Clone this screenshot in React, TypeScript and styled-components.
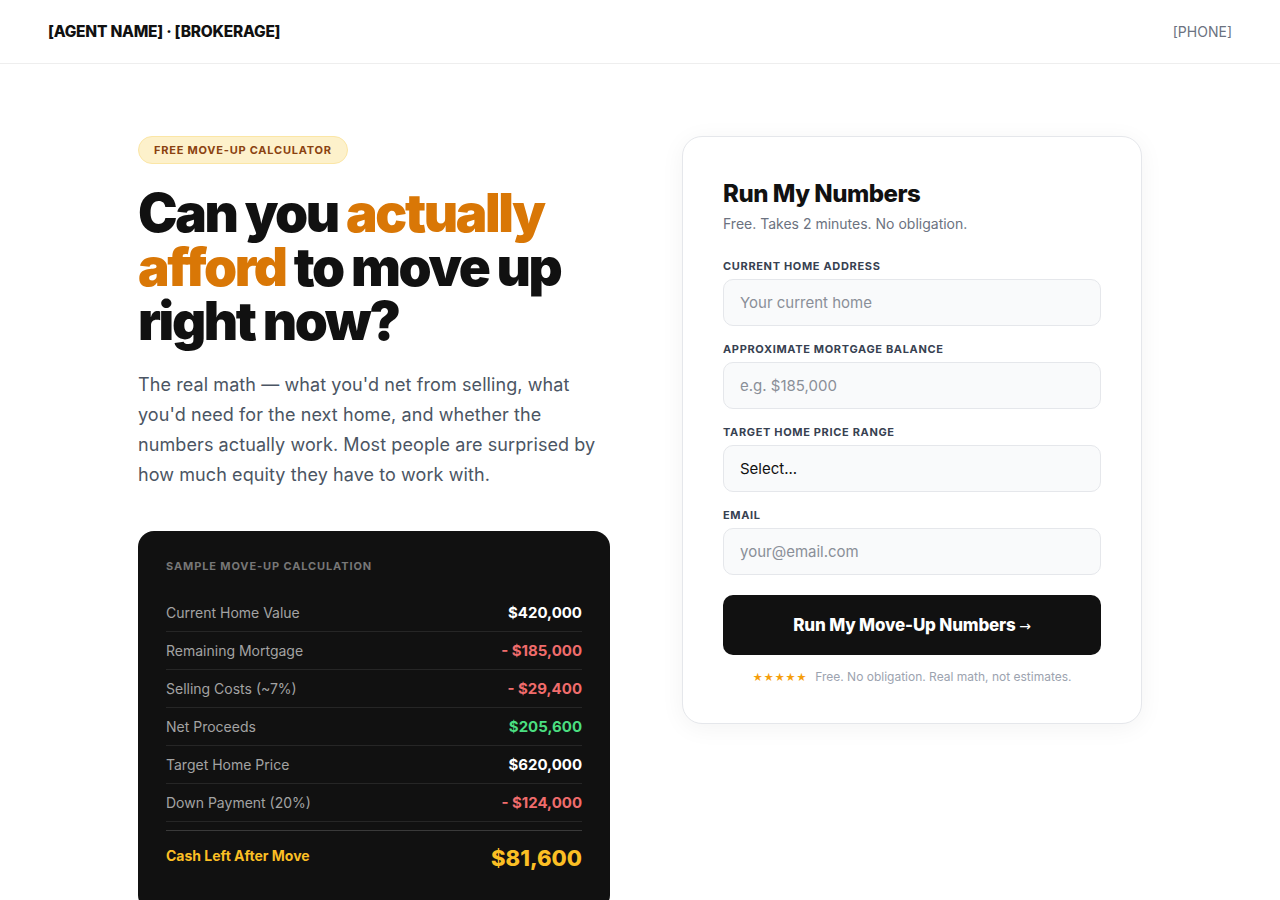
import React from "react";
import styled, { createGlobalStyle } from "styled-components";

const GlobalStyle = createGlobalStyle`
  * { box-sizing: border-box; }
  body {
    margin: 0;
    background: #ffffff;
    font-family: Inter, "Liberation Sans", sans-serif;
    color: #111111;
  }
`;

const DISPLAY = `Inter, "Liberation Sans", sans-serif`;

type Tone = "plain" | "minus" | "plus";

const rows: { label: string; value: string; tone: Tone }[] = [
  { label: "Current Home Value", value: "$420,000", tone: "plain" },
  { label: "Remaining Mortgage", value: "- $185,000", tone: "minus" },
  { label: "Selling Costs (~7%)", value: "- $29,400", tone: "minus" },
  { label: "Net Proceeds", value: "$205,600", tone: "plus" },
  { label: "Target Home Price", value: "$620,000", tone: "plain" },
  { label: "Down Payment (20%)", value: "- $124,000", tone: "minus" },
];

const fields = [
  { label: "Current Home Address", placeholder: "Your current home", type: "text" },
  { label: "Approximate Mortgage Balance", placeholder: "e.g. $185,000", type: "text" },
  { label: "Target Home Price Range", placeholder: "", type: "select" },
  { label: "Email", placeholder: "your@email.com", type: "email" },
];

export default function App() {
  return (
    <>
      <GlobalStyle />
      <Header>
        <Brand>[AGENT NAME] · [BROKERAGE]</Brand>
        <Phone>[PHONE]</Phone>
      </Header>
      <Main>
        <Left>
          <Badge>Free Move-Up Calculator</Badge>
          <Title>
            Can you <Accent>actually afford</Accent> to move up right now?
          </Title>
          <Lead>
            The real math — what you'd net from selling, what you'd need for the next home, and
            whether the numbers actually work. Most people are surprised by how much equity they
            have to work with.
          </Lead>
          <CalcCard>
            <CalcTitle>Sample Move-Up Calculation</CalcTitle>
            {rows.map((r) => (
              <CalcRow key={r.label}>
                <CalcLabel>{r.label}</CalcLabel>
                <CalcValue tone={r.tone}>{r.value}</CalcValue>
              </CalcRow>
            ))}
            <TotalRow>
              <TotalLabel>Cash Left After Move</TotalLabel>
              <TotalValue>$81,600</TotalValue>
            </TotalRow>
          </CalcCard>
        </Left>
        <FormCard>
          <FormTitle>Run My Numbers</FormTitle>
          <FormSub>Free. Takes 2 minutes. No obligation.</FormSub>
          <Fields>
            {fields.map((f) => (
              <Field key={f.label}>
                <FieldLabel>{f.label}</FieldLabel>
                {f.type === "select" ? (
                  <SelectBox defaultValue="">
                    <option value="">Select...</option>
                    <option>$400k – $500k</option>
                    <option>$500k – $650k</option>
                    <option>$650k – $800k</option>
                    <option>$800k+</option>
                  </SelectBox>
                ) : (
                  <TextInput type={f.type} placeholder={f.placeholder} />
                )}
              </Field>
            ))}
          </Fields>
          <SubmitButton type="button">
            Run My Move-Up Numbers <Arrow>→</Arrow>
          </SubmitButton>
          <Note>
            <Stars>★★★★★</Stars>
            Free. No obligation. Real math, not estimates.
          </Note>
        </FormCard>
      </Main>
    </>
  );
}

const Header = styled.header`
  display: flex;
  align-items: center;
  justify-content: space-between;
  height: 64px;
  padding: 0 48px;
  border-bottom: 1px solid #eeeeee;
`;

const Brand = styled.div`
  font-family: ${DISPLAY};
  font-weight: 800;
  font-size: 15.5px;
  letter-spacing: -0.015em;
  color: #111111;
`;

const Phone = styled.div`
  font-size: 14px;
  color: #6b7280;
`;

const Main = styled.main`
  display: grid;
  grid-template-columns: 472px 460px;
  justify-content: center;
  align-items: start;
  gap: 72px;
  padding: 72px 48px 0;
`;

const Left = styled.section`
  display: flex;
  flex-direction: column;
  align-items: flex-start;
`;

const Badge = styled.span`
  display: inline-block;
  padding: 7px 15px;
  border-radius: 999px;
  background: #fdf1cb;
  border: 1px solid #fbe6a6;
  color: #8a4210;
  font-size: 11px;
  font-weight: 700;
  letter-spacing: 0.07em;
  text-transform: uppercase;
  line-height: 12px;
`;

const Title = styled.h1`
  margin: 22px 0 0;
  font-family: ${DISPLAY};
  font-weight: 900;
  font-size: 53px;
  line-height: 54px;
  letter-spacing: -0.045em;
  color: #111111;
  max-width: 460px;
`;

const Accent = styled.span`
  color: #d97706;
`;

const Lead = styled.p`
  margin: 22px 0 0;
  font-size: 18px;
  line-height: 30px;
  letter-spacing: 0.005em;
  color: #4b5563;
  max-width: 470px;
`;

const CalcCard = styled.div`
  width: 100%;
  margin-top: 41px;
  padding: 28px 28px 40px;
  border-radius: 16px;
  background: #111111;
`;

const CalcTitle = styled.div`
  font-size: 11px;
  font-weight: 700;
  letter-spacing: 0.08em;
  text-transform: uppercase;
  color: #777777;
  margin-bottom: 21px;
`;

const CalcRow = styled.div`
  display: flex;
  justify-content: space-between;
  align-items: center;
  height: 38px;
  border-bottom: 1px solid #262626;
`;

const CalcLabel = styled.span`
  font-size: 14px;
  color: #a3a3a3;
`;

const toneColor: Record<Tone, string> = {
  plain: "#ffffff",
  minus: "#f06c6c",
  plus: "#4ade80",
};

const CalcValue = styled.span<{ tone: Tone }>`
  font-size: 15px;
  font-weight: 700;
  color: ${(p) => toneColor[p.tone]};
`;

const TotalRow = styled.div`
  display: flex;
  justify-content: space-between;
  align-items: center;
  margin-top: 8px;
  padding-top: 14px;
  border-top: 1px solid #3a3a3a;
`;

const TotalLabel = styled.span`
  font-size: 14px;
  font-weight: 700;
  color: #fbbf24;
  padding-bottom: 6px;
`;

const TotalValue = styled.span`
  font-size: 22px;
  font-weight: 800;
  color: #fbbf24;
`;

const FormCard = styled.section`
  padding: 41px 40px 39px;
  border: 1px solid #e5e7eb;
  border-radius: 20px;
  background: #ffffff;
  box-shadow: 0 4px 24px rgba(0, 0, 0, 0.05);
`;

const FormTitle = styled.h2`
  margin: 0;
  font-family: ${DISPLAY};
  font-weight: 800;
  font-size: 24px;
  line-height: 32px;
  letter-spacing: -0.02em;
  color: #111111;
`;

const FormSub = styled.p`
  margin: 4px 0 0;
  font-size: 14px;
  line-height: 20px;
  color: #6b7280;
`;

const Fields = styled.div`
  display: flex;
  flex-direction: column;
  gap: 17px;
  margin-top: 26px;
`;

const Field = styled.label`
  display: flex;
  flex-direction: column;
  gap: 6px;
`;

const FieldLabel = styled.span`
  font-size: 11px;
  font-weight: 700;
  letter-spacing: 0.06em;
  text-transform: uppercase;
  color: #374151;
  line-height: 13px;
`;

const inputBase = `
  width: 100%;
  height: 47px;
  padding: 0 16px;
  border: 1px solid #e5e7eb;
  border-radius: 10px;
  background: #f9fafb;
  font-family: Inter, "Liberation Sans", sans-serif;
  font-size: 15px;
  color: #111111;
  outline: none;
`;

const TextInput = styled.input`
  ${inputBase}
  &::placeholder {
    color: #8a8f98;
  }
`;

const SelectBox = styled.select`
  ${inputBase}
  appearance: none;
`;

const SubmitButton = styled.button`
  width: 100%;
  height: 60px;
  margin-top: 20px;
  border: none;
  border-radius: 10px;
  background: #111111;
  color: #ffffff;
  font-family: ${DISPLAY};
  font-weight: 800;
  font-size: 17px;
  letter-spacing: -0.01em;
  cursor: pointer;
`;

const Arrow = styled.span`
  font-family: "DejaVu Sans", sans-serif;
  font-weight: 400;
  font-size: 14px;
`;

const Note = styled.p`
  margin: 14px 0 0;
  text-align: center;
  font-size: 12px;
  color: #9ca3af;
`;

const Stars = styled.span`
  color: #f59e0b;
  font-size: 10px;
  letter-spacing: 0.5px;
  margin-right: 8px;
`;
